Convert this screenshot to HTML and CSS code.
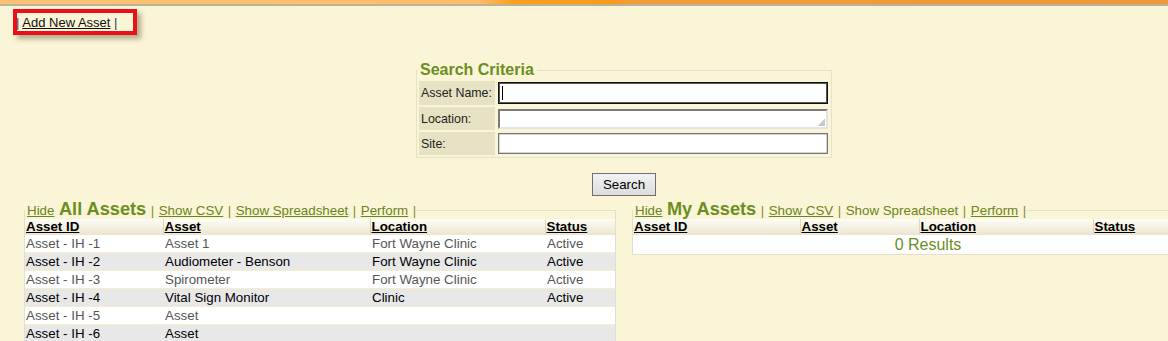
FILE: index.html
```html
<!DOCTYPE html>
<html lang="en">
<head>
<meta charset="utf-8">
<title>Assets</title>
<link rel="stylesheet" href="styles.css">
</head>
<body>
<div class="topbar"></div>
<div class="actions">
  <span class="pipe">|</span> <a href="#" class="add-link">Add New Asset</a> <span class="pipe">|</span>
  <span class="highlight"></span>
</div>
<div class="page">
  <fieldset class="search">
    <legend>Search Criteria</legend>
    <table class="search-table">
      <tr class="r1">
        <td class="lbl">Asset Name:</td>
        <td class="fld"><span class="input-wrap"><input type="text" class="inp focused"><span class="caret"></span></span></td>
      </tr>
      <tr class="r2">
        <td class="lbl">Location:</td>
        <td class="fld"><textarea class="area" rows="1"></textarea></td>
      </tr>
      <tr class="r3">
        <td class="lbl">Site:</td>
        <td class="fld"><input type="text" class="inp"></td>
      </tr>
    </table>
  </fieldset>
  <div class="btn-row"><button class="search-btn">Search</button></div>
  <div class="panels">
    <fieldset class="panel">
      <legend><a href="#" class="lnk">Hide</a> <span class="title">All Assets</span> <span class="pipe2">|</span> <a href="#" class="lnk">Show CSV</a> <span class="pipe2">|</span> <a href="#" class="lnk">Show Spreadsheet</a> <span class="pipe2">|</span> <a href="#" class="lnk">Perform</a> <span class="pipe2">|</span></legend>
      <table class="grid grid-left">
        <colgroup><col style="width:138px"><col style="width:207px"><col style="width:175px"><col style="width:70px"></colgroup>
        <thead>
          <tr><th><a href="#">Asset ID</a></th><th><a href="#">Asset</a></th><th><a href="#">Location</a></th><th><a href="#">Status</a></th></tr>
        </thead>
        <tbody>
          <tr class="odd"><td>Asset - IH -1</td><td>Asset 1</td><td>Fort Wayne Clinic</td><td>Active</td></tr>
          <tr class="even"><td>Asset - IH -2</td><td>Audiometer - Benson</td><td>Fort Wayne Clinic</td><td>Active</td></tr>
          <tr class="odd"><td>Asset - IH -3</td><td>Spirometer</td><td>Fort Wayne Clinic</td><td>Active</td></tr>
          <tr class="even"><td>Asset - IH -4</td><td>Vital Sign Monitor</td><td>Clinic</td><td>Active</td></tr>
          <tr class="odd"><td>Asset - IH -5</td><td>Asset</td><td></td><td></td></tr>
          <tr class="even"><td>Asset - IH -6</td><td>Asset</td><td></td><td></td></tr>
        </tbody>
      </table>
    </fieldset>
    <fieldset class="panel">
      <legend><a href="#" class="lnk">Hide</a> <span class="title">My Assets</span> <span class="pipe2">|</span> <a href="#" class="lnk">Show CSV</a> <span class="pipe2">|</span> <span class="plain">Show Spreadsheet</span> <span class="pipe2">|</span> <a href="#" class="lnk">Perform</a> <span class="pipe2">|</span></legend>
      <table class="grid grid-right">
        <colgroup><col style="width:167px"><col style="width:119px"><col style="width:174px"><col style="width:130px"></colgroup>
        <thead>
          <tr><th><a href="#">Asset ID</a></th><th><a href="#">Asset</a></th><th><a href="#">Location</a></th><th><a href="#">Status</a></th></tr>
        </thead>
        <tbody>
          <tr class="empty"><td colspan="4">0 Results</td></tr>
        </tbody>
      </table>
    </fieldset>
  </div>
</div>
</body>
</html>
```
FILE: styles.css
```css
html, body {
  margin: 0;
  padding: 0;
  overflow: hidden;
}
body {
  background: #fbf5d7;
  font-family: "Liberation Sans", Arial, sans-serif;
  font-size: 13.33px;
  color: #000;
}
.topbar {
  height: 4px;
  background: linear-gradient(90deg, #fcc274 0%, #fdbd6a 41%, #fa9f1c 44%, #f99c18 52%, #f39a3a 54.5%, #f2983c 100%);
  border-bottom: 2px solid #b9b39a;
}
.actions {
  position: relative;
  padding: 9px 0 0 16px;
  height: 15px;
  line-height: 15px;
  font-size: 13px;
  color: #223;
}
.actions .pipe { color: #2a3a70; }
.add-link { color: #111; text-decoration: underline; }
.highlight {
  position: absolute;
  left: 13px;
  top: 3px;
  width: 116px;
  height: 18px;
  border: 4px solid #e8101a;
  box-shadow: 4px 4px 5px rgba(90, 85, 50, 0.45);
}
.page {
  width: 1248px;
}
.search {
  width: 414px;
  margin: 31px auto 0;
  padding: 0;
  border: 1px solid #e6e1cb;
  min-inline-size: 0;
}
.search legend {
  padding: 0 3px 0 3px;
  margin-left: 0;
  font-size: 16px;
  line-height: 18px;
  font-weight: bold;
  color: #6b8e23;
}
.search-table {
  border-spacing: 2px;
  width: 414px;
  font-size: 12.4px;
}
.search-table td { padding: 0; }
.lbl {
  width: 72px;
  background: #e8e2c4;
  color: #222;
  padding: 0 2px !important;
  vertical-align: middle;
  white-space: nowrap;
}
.fld {
  width: 330px;
  padding: 0 1px !important;
  vertical-align: middle;
}
.r1 td { height: 24px; }
.r2 td, .r3 td { height: 23px; }
.input-wrap {
  position: relative;
  display: block;
}
.inp {
  display: block;
  box-sizing: border-box;
  width: 330px;
  height: 21px;
  margin: 0;
  padding: 0 3px;
  border: 1px solid #767676;
  box-shadow: inset 0 0 0 0.5px #aaa;
  background: #fff;
  font: 12px "Liberation Sans", Arial, sans-serif;
  outline: none;
}
.inp.focused {
  height: 22px;
  border: 1px solid #111;
  box-shadow: inset 0 0 0 1px #555;
}
.caret {
  position: absolute;
  left: 4px;
  top: 4px;
  width: 1px;
  height: 14px;
  background: #000;
}
.area {
  display: block;
  box-sizing: border-box;
  width: 330px;
  height: 20px;
  margin: 0;
  padding: 0 3px;
  border: 2px solid;
  border-color: #7a7a7a #e4e4e4 #e4e4e4 #7a7a7a;
  background: #fff linear-gradient(135deg, transparent 50%, #c9c9c9 50%) no-repeat right 1px bottom 1px / 7px 7px;
  font: 12px "Liberation Sans", Arial, sans-serif;
  resize: none;
  overflow: hidden;
  outline: none;
}
.btn-row {
  text-align: center;
  margin-top: 15px;
  height: 23px;
}
.search-btn {
  box-sizing: border-box;
  width: 64px;
  height: 23px;
  padding: 0;
  border: 1px solid #707070;
  border-radius: 0;
  background: linear-gradient(#f3f3f3, #dcdcdc);
  font: 13.33px "Liberation Sans", Arial, sans-serif;
  color: #000;
}
.panels {
  display: flex;
  gap: 16px;
  margin: 4px 0 0 24px;
  align-items: flex-start;
}
.panel {
  margin: 0;
  padding: 0;
  border: 1px solid #e3dfcc;
  min-inline-size: 0;
  width: 590px;
}
.panel legend {
  padding: 0 0 0 2px;
  margin: 0;
  font-size: 13.33px;
  line-height: 19px;
  color: #7a8c2a;
  white-space: nowrap;
  word-spacing: 0.8px;
}
.lnk {
  color: #6a8420;
  text-decoration: underline;
  word-spacing: 0;
}
.plain { color: #6a8420; word-spacing: 0; }
.title {
  font-size: 18.2px;
  font-weight: bold;
  color: #6b8e23;
  line-height: 18px;
  word-spacing: 0;
}
.pipe2 { color: #7f8e2c; }
.grid {
  width: 590px;
  border-collapse: collapse;
  table-layout: fixed;
  margin-top: -1px;
}
.grid th {
  height: 16px;
  padding: 0 1px;
  text-align: left;
  font-weight: bold;
  line-height: 16px;
  background: linear-gradient(#fdfcf6, #ebe5ce);
  border-left: 1px solid #ddd7c0;
  white-space: nowrap;
}
.grid th:first-child { border-left: none; }
.grid th a { color: #000; text-decoration: underline; }
.grid td {
  height: 17px;
  padding: 0 1px;
  line-height: 17px;
  border-bottom: 1px solid #f5eec8;
  white-space: nowrap;
  overflow: hidden;
}
.grid td + td { padding-left: 2px; }
.odd td { background: #fff; color: #555; }
.even td { background: #e8e8e8; color: #000; }
.empty td {
  background: #fff;
  color: #6b8e23;
  font-size: 16px;
  text-align: center;
  height: 19px;
  line-height: 19px;
  border-bottom: none;
}
```
